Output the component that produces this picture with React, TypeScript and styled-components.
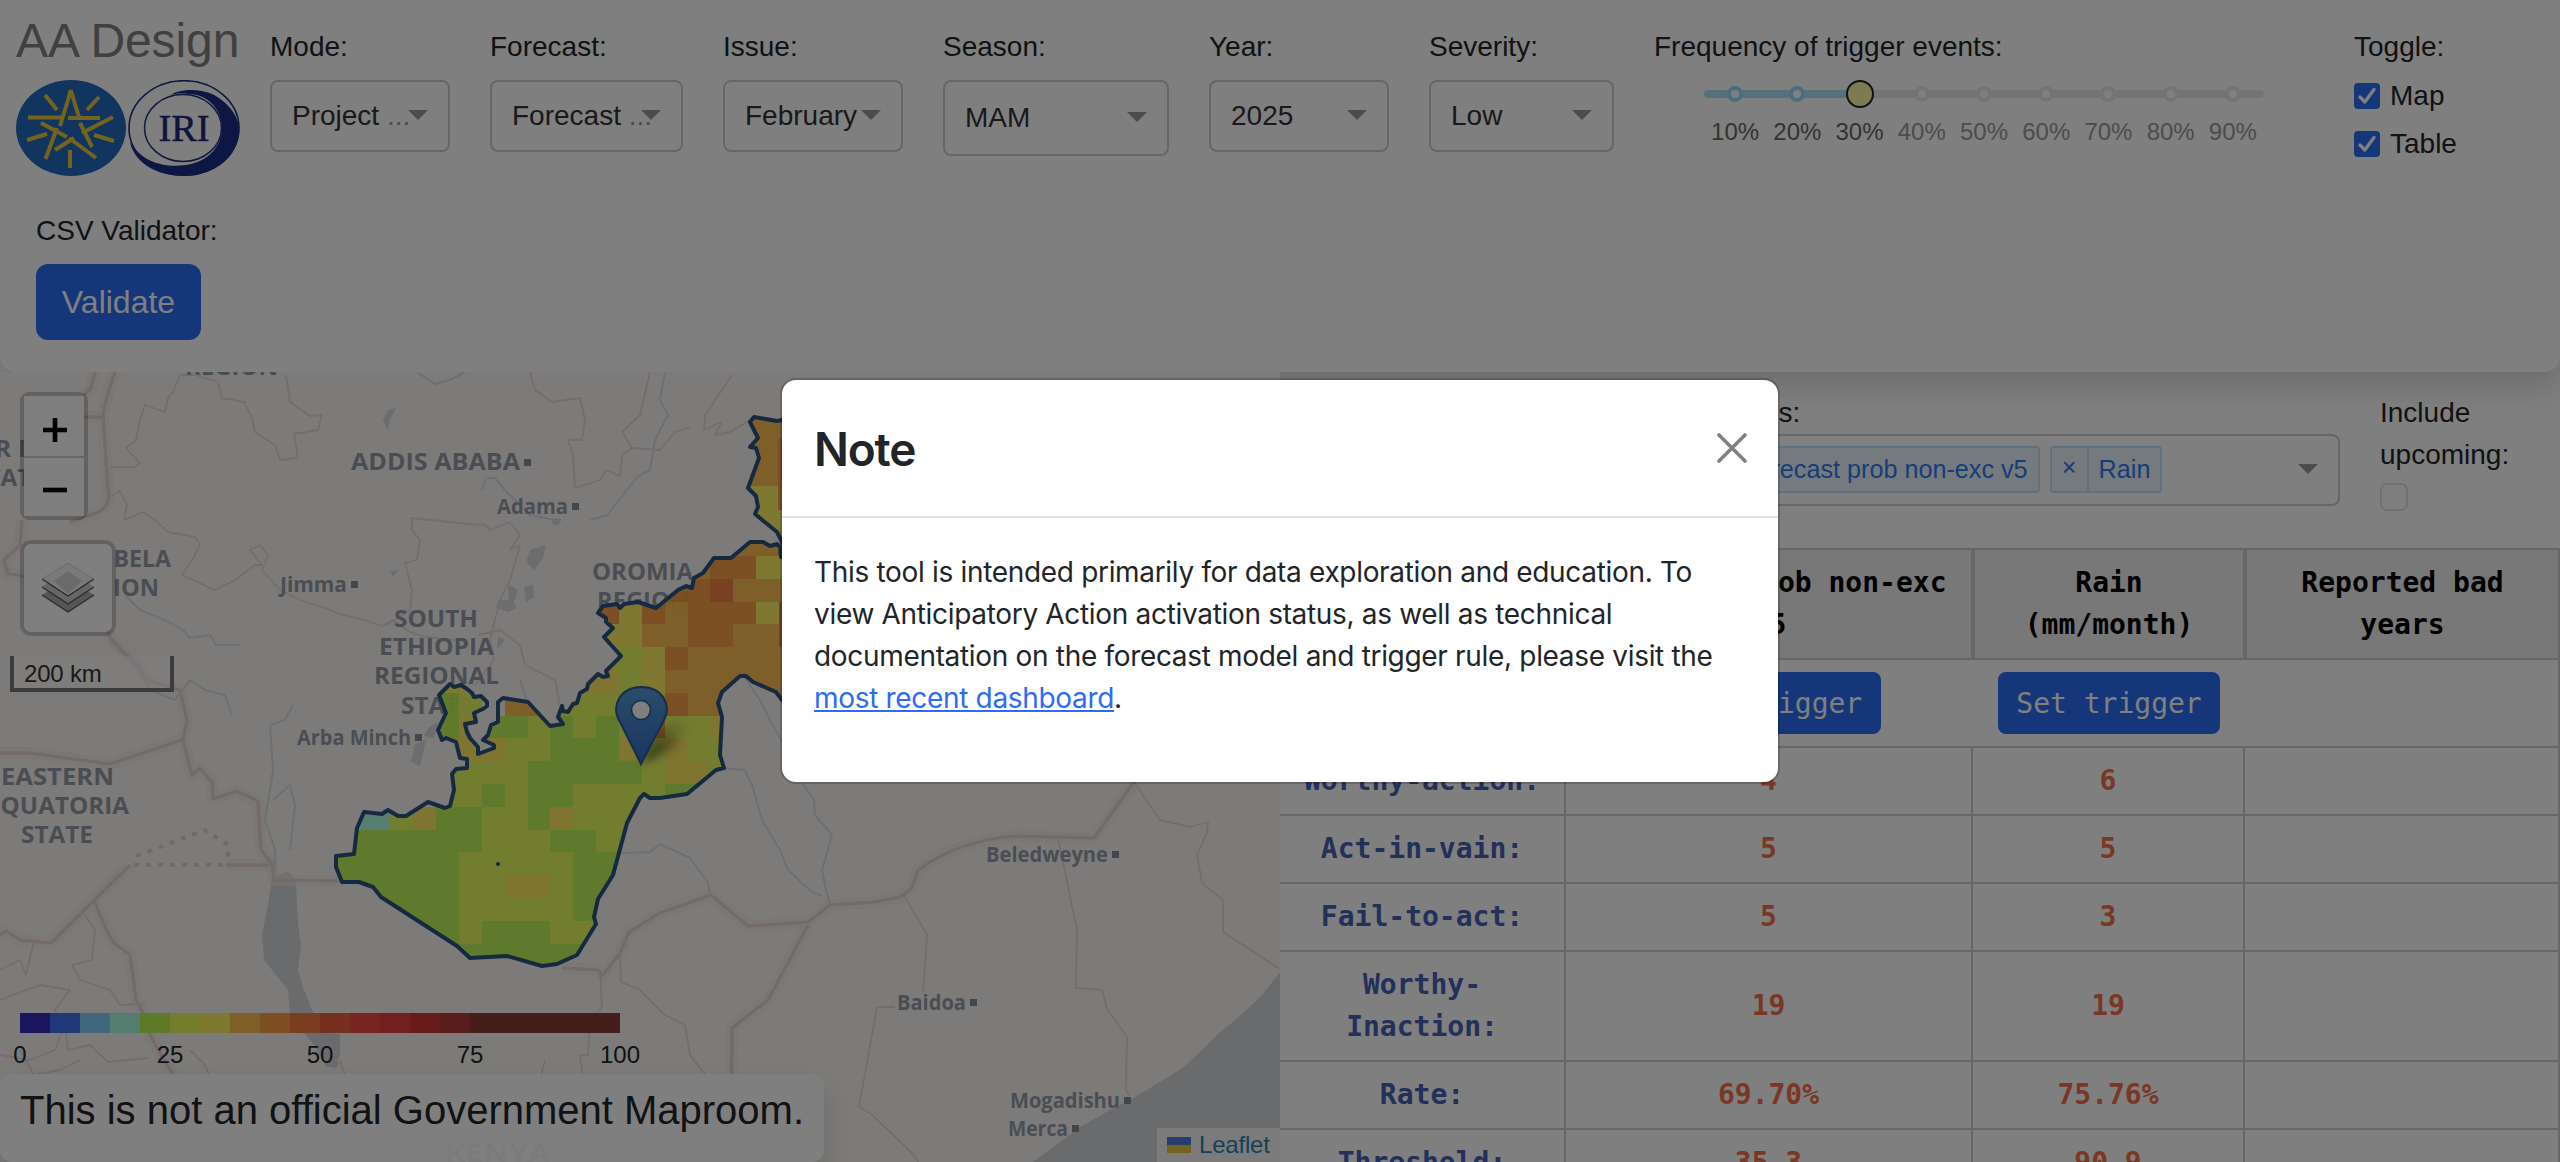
import React from "react";
import styled, { createGlobalStyle } from "styled-components";

const sans = `"Liberation Sans", Arial, Helvetica, sans-serif`;
const mono = `"DejaVu Sans Mono", Menlo, monospace`;

const GlobalStyle = createGlobalStyle`
  *, *::before, *::after { box-sizing: border-box; }
  body { margin: 0; background: #fff; overflow: hidden; }
`;

const Page = styled.div`
  position: relative;
  width: 2560px;
  height: 1162px;
  overflow: hidden;
  display: flex;
  flex-direction: column;
  background: #fff;
  color: #212529;
  font-family: ${sans};
  font-size: 28px;
  line-height: 42px;
`;

const Header = styled.header`
  position: relative;
  z-index: 1;
  flex: none;
  height: 372px;
  padding: 12px 16px 0;
  background: #fff;
  border-radius: 16px;
  box-shadow: 0 16px 32px rgba(0, 0, 0, 0.15);
`;

const ControlRow = styled.div`
  display: flex;
  align-items: flex-start;
  gap: 40px;
  height: 198px;
`;

const Brand = styled.div`
  width: 224px;
  margin-right: -10px;
`;

const Title = styled.h1`
  margin: 0 0 12px;
  font-size: 48px;
  font-weight: 400;
  line-height: 57px;
  height: 56px;
  letter-spacing: -0.1px;
  white-space: nowrap;
  color: #808080;
`;

const Logos = styled.div`
  display: flex;
  gap: 2px;
  svg { display: block; }
`;

const Field = styled.div<{ $w?: number }>`
  flex: none;
  margin-top: 14px;
  width: ${(p) => (p.$w ? `${p.$w}px` : "auto")};
`;

const Label = styled.div<{ $gap?: number }>`
  margin-bottom: ${(p) => p.$gap ?? 12}px;
  white-space: nowrap;
`;

const SelectBox = styled.div<{ $tall?: boolean }>`
  display: flex;
  align-items: center;
  height: ${(p) => (p.$tall ? 76 : 72)}px;
  padding: 0 20px 0 20px;
  border: 2px solid #ccc;
  border-radius: 8px;
  color: #333;
`;

const SelectText = styled.span`
  flex: 1 1 0;
  min-width: 0;
  white-space: nowrap;
`;

const Dots = styled.span`
  color: #999;
`;

const Caret = styled.span`
  flex: none;
  width: 20px;
  height: 10px;
  margin-top: -2px;
  background: #999;
  clip-path: polygon(0 0, 100% 0, 50% 100%);
`;

const FreqField = styled(Field)`
  width: 660px;
`;

const Slider = styled.div`
  width: 560px;
  margin: 22px 0 0 50px;
`;

const Rail = styled.div`
  position: relative;
  height: 8px;
  border-radius: 6px;
  background: #e9e9e9;
`;

const Track = styled.div`
  width: 156px;
  height: 8px;
  border-radius: 6px 0 0 6px;
  background: #abe2fb;
`;

const Ticks = styled.div`
  position: absolute;
  inset: -10px 0;
  display: grid;
  grid-template-columns: repeat(9, 1fr);
  place-items: center;
`;

const Tick = styled.span<{ $on: boolean }>`
  width: 16px;
  height: 16px;
  border: 4px solid ${(p) => (p.$on ? "#96dbfa" : "#e9e9e9")};
  border-radius: 50%;
  background: #fff;
`;

const Handle = styled.span`
  width: 28px;
  height: 28px;
  border: 2px solid #212529;
  border-radius: 50%;
  background: #f8f6a4;
`;

const Marks = styled.div`
  display: grid;
  grid-template-columns: repeat(9, 1fr);
  margin-top: 16px;
  font-size: 24px;
  line-height: 36px;
  text-align: center;
`;

const Mark = styled.span<{ $on: boolean }>`
  color: ${(p) => (p.$on ? "#666" : "#999")};
`;

const CheckRow = styled.div`
  display: flex;
  align-items: center;
  gap: 10px;
  height: 48px;
`;

const CheckMark = styled.span`
  width: 26px;
  height: 26px;
  border-radius: 4px;
  background: #2c6cf4;
  svg { display: block; }
`;

const CsvField = styled.div`
  padding-left: 20px;
`;

const Button = styled.button<{ $mono?: boolean }>`
  display: block;
  border: 0;
  border-radius: ${(p) => (p.$mono ? 8 : 12)}px;
  background: #2c6cf4;
  color: #fff;
  padding: 0;
  width: ${(p) => (p.$mono ? 222 : 165)}px;
  height: ${(p) => (p.$mono ? 62 : 76)}px;
  font-family: ${(p) => (p.$mono ? mono : sans)};
  font-size: ${(p) => (p.$mono ? 28 : 32)}px;
`;

const Main = styled.main`
  flex: 1;
  display: flex;
  min-height: 0;
`;

const MapPane = styled.section`
  position: relative;
  z-index: 2;
  width: 1280px;
  height: 790px;
  overflow: hidden;
  background: #f9f7f2;
`;

const MapDrawing = styled.svg`
  display: block;
  font-family: "Open Sans", "Noto Sans", sans-serif;
`;

const ZoomBar = styled.div`
  position: absolute;
  left: 20px;
  top: 20px;
  width: 68px;
  border: 4px solid rgba(0, 0, 0, 0.2);
  background-clip: padding-box;
  border-radius: 9px;
`;

const ZoomKey = styled.div`
  height: 60px;
  padding: 8px 0 0 1px;
  display: grid;
  place-items: center;
  background: #fff;
  svg { display: block; }
  & + & { padding-top: 6px; border-top: 2px solid #ccc; }
`;

const LayersKey = styled.div`
  position: absolute;
  left: 20px;
  top: 168px;
  width: 96px;
  height: 96px;
  display: grid;
  place-items: center;
  border: 4px solid rgba(0, 0, 0, 0.2);
  border-radius: 11px;
  background: #fff;
  background-clip: padding-box;
`;

const ScaleBar = styled.div`
  position: absolute;
  left: 10px;
  top: 284px;
  width: 164px;
  height: 36px;
  padding-left: 10px;
  border: 4px solid #777;
  border-top: 0;
  background: rgba(255, 255, 255, 0.5);
  font-size: 24px;
  line-height: 35px;
  letter-spacing: -0.2px;
  color: #333;
`;

const Legend = styled.div`
  position: absolute;
  left: 20px;
  top: 641px;
  width: 600px;
`;

const LegendBar = styled.div`
  display: flex;
  height: 20px;
`;

const Swatch = styled.span<{ $c: string; $n?: number }>`
  flex: ${(p) => p.$n ?? 1};
  background: ${(p) => p.$c};
`;

const LegendScale = styled.div`
  display: flex;
  justify-content: space-between;
  margin: 4px -30px 0;
  font-size: 24px;
  line-height: 36px;
  span { width: 60px; text-align: center; }
`;

const Disclaimer = styled.div`
  position: absolute;
  left: 0;
  top: 702px;
  width: 824px;
  height: 88px;
  padding-left: 20px;
  border-radius: 12px;
  background: rgba(255, 255, 255, 0.92);
  box-shadow: 0 16px 32px rgba(0, 0, 0, 0.15);
  font-size: 40px;
  line-height: 73px;
  white-space: nowrap;
`;

const Attribution = styled.div`
  position: absolute;
  right: 0;
  bottom: 0;
  display: flex;
  align-items: center;
  gap: 8px;
  width: 123px;
  height: 34px;
  padding-left: 10px;
  background: rgba(255, 255, 255, 0.8);
  font-size: 24px;
  letter-spacing: -0.2px;
  color: #2e80ac;
`;

const Flag = styled.span`
  width: 24px;
  height: 16px;
  background: linear-gradient(#4c7be1 50%, #e8c43a 50%);
`;

const DataPane = styled.section`
  width: 1280px;
  background: #fff;
`;

const Filters = styled.div`
  display: flex;
  justify-content: flex-end;
  gap: 40px;
  height: 176px;
  padding: 20px 20px 0 0;
`;

const Columns = styled.div`
  width: 658px;
`;

const MultiSelect = styled.div`
  display: flex;
  align-items: center;
  gap: 10px;
  height: 72px;
  padding: 0 20px 0 9px;
  border: 2px solid #ccc;
  border-radius: 8px;
`;

const Tag = styled.span`
  display: flex;
  height: 47px;
  margin-top: -1px;
  border: 2px solid #c2e0ff;
  border-radius: 4px;
  background: #ebf5ff;
  color: #2f7bf0;
  font-size: 25.2px;
  line-height: 43px;
  white-space: nowrap;
`;

const TagClose = styled.span`
  width: 37px;
  border-right: 2px solid #c2e0ff;
  text-align: center;
  line-height: 38px;
`;

const TagText = styled.span`
  padding: 0 10px;
`;

const CaretEnd = styled(Caret)`
  margin-left: auto;
`;

const Include = styled.div`
  width: 160px;
`;

const EmptyCheck = styled.div`
  width: 28px;
  height: 28px;
  margin-top: 7px;
  border: 2px solid #dee2e6;
  border-radius: 7px;
`;

const Grid = styled.div`
  font-family: ${mono};
  border-top: 2px solid #ccc;
`;

const GridRow = styled.div`
  display: grid;
  grid-template-columns: 286px 407px 272px 315px;
  border-bottom: 2px solid #ccc;
`;

const HeadCell = styled.div`
  height: 108px;
  padding: 12px 20px;
  border: solid #ccc;
  border-width: 0 2px;
  background: #f0f0f0;
  color: #000;
  font-weight: 700;
  text-align: center;
  white-space: pre-line;
`;

const ButtonCell = styled.div<{ $last?: boolean }>`
  height: 86px;
  display: grid;
  place-items: center;
  border-right: ${(p) => (p.$last ? "2px solid #ccc" : "0")};
`;

const Cell = styled.div<{ $name?: boolean }>`
  display: grid;
  place-items: center;
  min-height: 66px;
  padding: 12px;
  border-right: 2px solid #ccc;
  font-weight: 700;
  text-align: center;
  color: ${(p) => (p.$name ? "#4461b4" : "#f0714b")};
  white-space: pre-line;
`;

const Backdrop = styled.div`
  position: absolute;
  inset: 0;
  z-index: 10;
  display: flex;
  justify-content: center;
  align-items: flex-start;
  padding-top: 378px;
  background: rgba(0, 0, 0, 0.5);
`;

const Dialog = styled.div`
  width: 1000px;
  height: 406px;
  border: 2px solid rgba(0, 0, 0, 0.175);
  border-radius: 16px;
  background: #fff;
  background-clip: padding-box;
  font-family: Inter, "Noto Sans", sans-serif;
`;

const DialogHead = styled.div`
  display: flex;
  align-items: center;
  justify-content: space-between;
  height: 138px;
  padding: 0 31px 0 32px;
  border-bottom: 2px solid #dee2e6;
`;

const DialogTitle = styled.h4`
  margin: 2px 0 0;
  font-size: 46px;
  font-weight: 600;
  letter-spacing: -1.2px;
`;

const DialogBody = styled.div`
  padding: 33px 32px;
  white-space: nowrap;
  letter-spacing: -0.32px;
`;

const Link = styled.a`
  color: #2c6cf4;
  text-decoration: underline;
`;

const selects = [
  { label: "Mode:", value: "Project", more: true, w: 180 },
  { label: "Forecast:", value: "Forecast", more: true, w: 193 },
  { label: "Issue:", value: "February", w: 180 },
  { label: "Season:", value: "MAM", w: 226, tall: true },
  { label: "Year:", value: "2025", w: 180 },
  { label: "Severity:", value: "Low", w: 185 },
];

const percents = [10, 20, 30, 40, 50, 60, 70, 80, 90];

const scaleColors = [
  "#362eb8", "#4270f0", "#82cef8", "#a8f8de", "#baf454", "#e4fa5a", "#fff060", "#febe4e",
  "#f89c44", "#f47a40", "#f0603c", "#ec4c42", "#e0403e", "#ce3836", "#b23a36",
];

const rows: [string, string, string][] = [
  ["Worthy-action:", "4", "6"],
  ["Act-in-vain:", "5", "5"],
  ["Fail-to-act:", "5", "3"],
  ["Worthy-\nInaction:", "19", "19"],
  ["Rate:", "69.70%", "75.76%"],
  ["Threshold:", "35.3", "90.9"],
];

/* Forecast raster: one letter per cell, read west to east and north to south. */
const rasterColors: Record<string, string> = {
  G: "#bcf450", Y: "#e6fa58", K: "#fff05c", L: "#fee858", O: "#febc4a", B: "#f89a42", R: "#f47a3c", T: "#aafce0",
};
const raster = [
  "................OOOOO",
  "................OBBKK",
  "...............BBROOO",
  "...........BBKBOBBBKR",
  "............KKOOBBOOR",
  "............YYKBOOOOO",
  ".....KK...LLLYKOOOOOO",
  ".....GY.OOYYYYYBOOOOO",
  ".....GLGGYGYGYBYYLOOO",
  ".....LLLYYGGGLYLYYOOO",
  ".....YYYYGGGGGYLLYOOO",
  ".....YYGYGGYYYYGGYOOO",
  "TTTYLGGYYGLYYYYYYYOOO",
  "GGGGGGGYYYGGYYYYYYOOO",
  "GGGGGGYYYYYGGGGYYYOOO",
  "GGGGGGYYLLYGGGGYYYOOO",
  "GGGGGGYYYYYGGGGYYYOOO",
  "GGGGGGYGGGYYYYYYYYOOO",
  "GGGGGGGGGGGGGGGGYYOOO",
];
const colW = 22.87;
const rowH = 22.8;

const regionPath =
  "M450 684L454 687L461 685L467 689L472 693L474 697L481 696L487 702L487 706L483 709L474 713L476 722L465 724L467 732L470 738L478 747L478 754L494 748L494 745L483 740L488 735L491 725L498 722L498 702L503 698L528 702L550 726L563 724L558 717L562 706L563 711L568 712L573 704L577 703L580 693L587 689L588 684L598 674L603 677L608 676L606 671L621 656L604 637L613 628L606 622L606 618L598 613L603 606L617 604L620 608L624 604L638 602L656 608L678 590L686 586L692 588L694 578L703 573L714 558L731 558L750 542L763 542L770 546L777 544L780 547L781 557L830 557L830 720L782 700L776 692L753 682L746 676L740 676L722 692L718 703L722 717L720 755L724 768L716 770L687 794L660 798L650 798L644 794L640 798L627 823L613 875L598 899L594 917L596 924L577 955L557 964L542 966L507 956L470 958L457 946L381 897L373 887L359 882L342 882L336 867L336 856L354 854L357 828L364 812L382 814L388 810L398 816L406 816L428 802L445 808L450 806L454 790L452 774L456 769L467 768L467 759L460 758L456 742L446 738L442 740L438 730L446 713L439 695Z";
const northPath =
  "M830 420L782 420L777 421L754 417L750 422L758 438L750 447L756 448L759 458L748 488L756 496L758 507L755 514L777 532L783 544L830 560Z";

const majorBorders = [
  "M95 372L91 388L84 395M115 372L106 400L103 414L108 490Q112 506 96 513L70 522M22 520L20 545L4 560L8 574L20 575",
  "M84 417L104 417",
  "M20 575L55 590L90 600L112 640L140 668L148 680L180 690L187 720L183 740L192 775L200 768L212 782L213 799L236 791L258 801L261 850L272 864L274 880L345 881",
  "M130 865L51 943L20 940L6 931L0 935M94 900L104 925L113 942L130 955L136 1000L147 1020L150 1035L164 1060L180 1085M0 753L30 753L110 764L182 740",
  "M226 865L274 865",
  "M562 968L598 970L602 976L620 953L629 932L660 913L711 895L748 926L808 922L830 905L875 902L900 897L912 888L918 870Q960 840 1015 836L1094 838L1134 782L1160 745",
  "M808 925L768 1000L732 1028L731 1162",
];
const minorBorders = [
  "M195 375L180 375L173 392L168 398L165 412L145 405L140 420L136 440L126 448L140 463L134 467L110 467M195 375L218 382L222 398L244 402L252 418L255 432L275 445L280 460L298 458L294 434L318 430L322 415L310 416L290 402L286 375",
  "M530 372L535 390L552 402L580 398L585 420L582 440L568 440L573 455L575 488L600 480L606 470L620 476L622 455L632 448L622 432L640 415L650 372",
  "M704 430L705 415L732 375M704 430L722 422L715 435L730 432L750 420M632 448L660 450L675 432L690 427",
  "M110 497L120 491L127 505L124 520L143 512L155 520L168 532L195 537L200 545L192 560L182 575L215 590L235 580L255 565L262 565L250 550L260 545L268 555L262 570L280 590L300 600L325 608L340 614L365 620L382 626L392 620L410 632L425 637L455 640",
  "M412 518L470 524L485 525L490 530L510 522L520 535L510 550L520 545L510 580L500 600L490 640L494 660L475 685M412 518L412 530L420 540L417 560L405 563L412 590L410 610L385 626",
  "M478 635L500 630L520 645L525 665L555 680L560 705",
  "M600 970L602 1007L590 1020L588 1055L580 1055L585 1100L600 1162M620 953L621 982L640 990L665 1015L685 1025L690 1055L705 1074",
  "M904 895L927 935L923 992M895 1007L877 1007L859 1107L870 1113L912 1153L918 1162M1058 838L1077 930L1076 988L1102 990L1107 1009L1127 1037L1126 1090L1130 1096",
  "M1134 782L1160 820L1190 827L1208 822L1207 833L1197 855L1202 883L1223 900L1223 932L1280 969",
  "M84 914L95 930L92 960L72 965L80 980L110 990L120 1005L145 1004M0 970L20 960L26 975L34 940M0 1000L40 985L70 990L55 1010L65 1025L55 1050L30 1060L0 1055M65 1025L68 1050L90 1045L108 1062L148 1058M20 1050L34 1075L60 1070L80 1060",
  "M340 1060L350 1090L370 1162M190 1050L205 1065L220 1100M545 1060L540 1080L552 1110L560 1162",
];
const rivers = [
  "M418 373L435 384L450 380L465 372M665 372L660 400L668 415L660 430L655 440L650 470L638 476L615 505L608 515L590 520M482 490L486 478L495 478L505 490L530 515L555 520",
  "M125 595L140 610L165 620L183 630L190 638L210 635L216 645L240 645M110 640L140 672L150 690L175 700L190 680L205 690L225 695L232 715",
  "M293 705L285 720L270 725L273 770L270 790L265 820L275 850L275 870M273 800L290 785L295 805L290 850",
  "M520 680L530 710M745 678L760 700L770 720L782 742M724 768L745 770L752 785L762 820L780 850L788 870L812 892L822 896",
  "M620 853L650 852L660 844L690 858L708 882L710 895M803 784L814 800L815 815L832 835L822 870L826 890L830 905",
];

interface Place { t: string; x: number; y: number; w: number; s?: number; dot?: boolean }
const places: Place[] = [
  { t: "REGION", x: 185, y: 375, w: 93 },
  { t: "UPPER NILE", x: -71, y: 457, w: 147 },
  { t: "STATE", x: -27, y: 486, w: 72 },
  { t: "GAMBELA", x: 59, y: 567, w: 112 },
  { t: "REGION", x: 67, y: 596, w: 92 },
  { t: "ADDIS ABABA", x: 351, y: 470, w: 169, dot: true },
  { t: "Adama", x: 497, y: 514, w: 71, s: 22, dot: true },
  { t: "Jimma", x: 280, y: 592, w: 67, s: 22, dot: true },
  { t: "SOUTH", x: 394, y: 627, w: 84 },
  { t: "ETHIOPIA", x: 379, y: 655, w: 115 },
  { t: "REGIONAL", x: 374, y: 684, w: 125 },
  { t: "STATE", x: 401, y: 714, w: 72 },
  { t: "OROMIA", x: 592, y: 580, w: 101 },
  { t: "REGION", x: 597, y: 609, w: 92 },
  { t: "Arba Minch", x: 297, y: 745, w: 114, s: 22, dot: true },
  { t: "EASTERN", x: 1, y: 785, w: 113 },
  { t: "EQUATORIA", x: -13, y: 814, w: 142 },
  { t: "STATE", x: 21, y: 843, w: 72 },
  { t: "KENYA", x: 445, y: 1162, w: 105, s: 25 },
  { t: "Beledweyne", x: 986, y: 862, w: 122, s: 21, dot: true },
  { t: "Baidoa", x: 897, y: 1010, w: 69, s: 21, dot: true },
  { t: "Mogadishu", x: 1010, y: 1108, w: 110, s: 21, dot: true },
  { t: "Merca", x: 1008, y: 1136, w: 60, s: 21, dot: true },
];

const EthiopiaEmblem = () => (
  <svg width="110" height="96" viewBox="0 0 110 96">
    <ellipse cx="55" cy="48" rx="55" ry="48" fill="#226abe" />
    <g fill="none" stroke="#e6c83a" strokeWidth="4">
      <path d="M29 15L41 30M83 17L71 30M11 60L31 54M98 61L78 55M54 70V88" />
      <path d="M54.700 10L63 37M54.700 10L52 20L44 46M12 37.500H46M52 38H84M97 37L66 53M58 58L39 70M25 43L51 57M29.500 79L41 48M80 78L53 58M64 43L76 67" />
    </g>
  </svg>
);

const IriLogo = () => (
  <svg width="112" height="96" viewBox="0 0 112 96">
    <ellipse cx="56" cy="48" rx="55" ry="47.3" fill="#fff" stroke="#1e327e" strokeWidth="1.6" />
    <path
      fill="#1c2f86"
      d="M42 15C52 9 70 8 84 14C100 22 111 36 111 50C111 77 86 96 56 96C28 96 6 82 2 62C14 82 36 88 58 85C80 82 94 66 94 48C94 30 80 14 60 14C52 13 46 14 42 15Z"
    />
    <ellipse cx="55" cy="48" rx="38.500" ry="33.500" fill="none" stroke="#1e327e" strokeWidth="1.5" />
    <text x="56" y="60.500" textAnchor="middle" fontFamily="Liberation Serif, serif" fontSize="38" textLength="51" lengthAdjust="spacingAndGlyphs" fill="#1a2c74" stroke="#1a2c74" strokeWidth="0.5">
      IRI
    </text>
  </svg>
);

const Check = () => (
  <CheckMark>
    <svg width="26" height="26" viewBox="0 0 26 26">
      <path d="M6 14L10.800 19L20 6.500" fill="none" stroke="#fff" strokeWidth="3.400" strokeLinecap="round" strokeLinejoin="round" />
    </svg>
  </CheckMark>
);

const MapArt = () => (
  <MapDrawing width="1280" height="790" viewBox="0 372 1280 790">
    <defs>
      <clipPath id="region">
        <path d={regionPath} />
      </clipPath>
      <clipPath id="north">
        <path d={northPath} />
      </clipPath>
      <linearGradient id="pin" x1="0" y1="0" x2="0" y2="1">
        <stop offset="0" stopColor="#569ad2" />
        <stop offset="1" stopColor="#326ac6" />
      </linearGradient>
      <linearGradient id="pinShade" x1="0" y1="1" x2="0.8" y2="0.2">
        <stop offset="0" stopColor="#000" stopOpacity="0.7" />
        <stop offset="1" stopColor="#000" stopOpacity="0.1" />
      </linearGradient>
      <filter id="soft" x="-50%" y="-50%" width="200%" height="200%">
        <feGaussianBlur stdDeviation="5" />
      </filter>
    </defs>

    <path d="M1280 972L1262 995L1240 1016L1218 1034L1204 1048L1184 1067L1160 1082L1130 1100L1110 1110L1080 1127L1060 1142L1033 1162H1280Z" fill="#d4d6da" />
    <path d="M272 878L288 872L296 880L297 905L298 925L301 945L298 970L304 990L314 1015L318 1040L325 1062L340 1062L336 1068L325 1065L314 1045L290 1015L288 990L272 970L264 960L262 935L268 905Z" fill="#d4d6da" />
    <path d="M290 1010L312 1010L318 1032L340 1034L340 1055L334 1068L326 1066L316 1046L292 1020Z" fill="#d4d6da" />
    <g fill="#d8dade">
      <path d="M388 410L396 408L390 420L388 430L383 420ZM530 550L546 545L543 558L534 570L526 562ZM508 584L518 590L515 600L509 602ZM524 588L533 584L534 598L526 602ZM498 600L514 600L516 608L508 612L496 608ZM552 518L562 519L558 526L552 524ZM428 728L438 722L434 738L424 736ZM415 744L426 740L420 766L411 762ZM390 572L398 570L393 577ZM498 636L505 640L497 650Z" />
    </g>

    <g fill="none" strokeLinejoin="round">
      {majorBorders.map((d) => (
        <path key={"h" + d} d={d} stroke="#f2e9e6" strokeWidth="12" opacity="0.6" />
      ))}
      {majorBorders.map((d) => (
        <path key={d} d={d} stroke="#e6d4d4" strokeWidth="3.2" />
      ))}
      {minorBorders.map((d) => (
        <path key={d} d={d} stroke="#eadada" strokeWidth="1.8" />
      ))}
      {rivers.map((d) => (
        <path key={d} d={d} stroke="#dcdee2" strokeWidth="2" />
      ))}
      <path d="M134 865H226M136 856L205 830L228 845V858" stroke="#e6d2d2" strokeWidth="4" strokeDasharray="5 7" />
    </g>

    {places.map((p) => (
      <g key={`${p.t}${p.x}-${p.y}`} fill="#949ca9">
        <text x={p.x} y={p.y} fontSize={p.s ?? 23} fontWeight={700} textLength={p.w} lengthAdjust="spacingAndGlyphs">
          {p.t}
        </text>
        {p.dot && <rect x={p.x + p.w + 4} y={p.y - 11} width="7" height="7" fill="#868e9a" />}
      </g>
    ))}

    <g clipPath="url(#region)" opacity="0.95" shapeRendering="crispEdges">
      {raster.flatMap((line, r) =>
        [...line].map((c, i) =>
          c === "." ? null : (
            <rect
              key={`${r}-${i}`}
              x={321.7 + i * colW}
              y={533.2 + r * rowH}
              width={colW + 0.5}
              height={rowH + 0.5}
              fill={rasterColors[c]}
            />
          )
        )
      )}
    </g>
    <g clipPath="url(#north)" opacity="0.95">
      <rect x="740" y="410" width="60" height="76" fill={rasterColors.O} />
      <rect x="740" y="486" width="60" height="80" fill={rasterColors.K} />
      <rect x="778" y="438" width="10" height="72" fill={rasterColors.B} />
    </g>
    <g fill="none" stroke="#2a5482" strokeWidth="4" strokeLinejoin="round">
      <path d={regionPath} />
      <path d={northPath} />
    </g>
    <circle cx="498" cy="864" r="2" fill="#234470" />

    <path d="M641 764L656 734Q668 716 684 722Q690 734 670 750Z" fill="url(#pinShade)" filter="url(#soft)" />
    <path d="M641 764L620 722C610 705 621 687 641.500 687C662 687 673 705 663 722Z" fill="url(#pin)" stroke="#2c5c94" strokeWidth="2" />
    <circle cx="641" cy="710" r="9.500" fill="#fff" stroke="#2c5c94" strokeWidth="1.600" />
  </MapDrawing>
);

const LayersIcon = () => (
  <svg width="52" height="52" viewBox="0 0 52 52">
    <path d="M0 33L26 17L52 33L26 50Z" fill="#acacac" />
    <path d="M0 33L26 50L52 33" fill="none" stroke="#555" strokeWidth="1.300" />
    <path d="M0 25L26 9L52 25L26 42Z" fill="#cacaca" />
    <path d="M0 25L26 42L52 25" fill="none" stroke="#555" strokeWidth="1.300" />
    <path d="M0 17L26 1L52 17L26 34Z" fill="#f2f2f2" stroke="#d0d0d0" strokeWidth="0.800" />
    <path d="M12 19L26 9L40 19L26 32Z" fill="#d6d6d6" />
    <path d="M0 17L26 34L52 17" fill="none" stroke="#555" strokeWidth="1.300" />
  </svg>
);

export default function App() {
  return (
    <Page>
      <GlobalStyle />
      <Header>
        <ControlRow>
          <Brand>
            <Title>AA Design</Title>
            <Logos>
              <EthiopiaEmblem />
              <IriLogo />
            </Logos>
          </Brand>
          {selects.map((s) => (
            <Field key={s.label} $w={s.w}>
              <Label>{s.label}</Label>
              <SelectBox $tall={s.tall}>
                <SelectText>
                  {s.value}
                  {s.more && <Dots> ...</Dots>}
                </SelectText>
                <Caret />
              </SelectBox>
            </Field>
          ))}
          <FreqField>
            <Label>Frequency of trigger events:</Label>
            <Slider>
              <Rail>
                <Track />
                <Ticks>
                  {percents.map((p) => (p === 30 ? <Handle key={p} /> : <Tick key={p} $on={p < 30} />))}
                </Ticks>
              </Rail>
              <Marks>
                {percents.map((p) => (
                  <Mark key={p} $on={p <= 30}>{p}%</Mark>
                ))}
              </Marks>
            </Slider>
          </FreqField>
          <Field>
            <Label $gap={4}>Toggle:</Label>
            <CheckRow><Check />Map</CheckRow>
            <CheckRow><Check />Table</CheckRow>
          </Field>
        </ControlRow>
        <CsvField>
          <Label>CSV Validator:</Label>
          <Button>Validate</Button>
        </CsvField>
      </Header>

      <Main>
        <MapPane>
          <MapArt />
          <ZoomBar>
            <ZoomKey>
              <svg width="26" height="26"><path d="M1 13H25M13 1V25" stroke="#000" strokeWidth="4.600" /></svg>
            </ZoomKey>
            <ZoomKey>
              <svg width="26" height="26"><path d="M1 13H25" stroke="#000" strokeWidth="4.600" /></svg>
            </ZoomKey>
          </ZoomBar>
          <LayersKey><LayersIcon /></LayersKey>
          <ScaleBar>200 km</ScaleBar>
          <Legend>
            <LegendBar>
              {scaleColors.map((c) => <Swatch key={c} $c={c} />)}
              <Swatch $c="#8a3a34" $n={5} />
            </LegendBar>
            <LegendScale>
              {[0, 25, 50, 75, 100].map((n) => <span key={n}>{n}</span>)}
            </LegendScale>
          </Legend>
          <Disclaimer>This is not an official Government Maproom.</Disclaimer>
          <Attribution><Flag />Leaflet</Attribution>
        </MapPane>

        <DataPane>
          <Filters>
            <Columns>
              <Label $gap={0}>Columns:</Label>
              <MultiSelect>
                <Tag><TagClose>×</TagClose><TagText>Forecast prob non-exc v5</TagText></Tag>
                <Tag><TagClose>×</TagClose><TagText>Rain</TagText></Tag>
                <CaretEnd />
              </MultiSelect>
            </Columns>
            <Include>
              Include upcoming:
              <EmptyCheck />
            </Include>
          </Filters>
          <Grid>
            <GridRow>
              <HeadCell />
              <HeadCell>{"Forecast prob non-exc\nv5"}</HeadCell>
              <HeadCell>{"Rain\n(mm/month)"}</HeadCell>
              <HeadCell>{"Reported bad\nyears"}</HeadCell>
            </GridRow>
            <GridRow>
              <ButtonCell />
              <ButtonCell><Button $mono>Set trigger</Button></ButtonCell>
              <ButtonCell><Button $mono>Set trigger</Button></ButtonCell>
              <ButtonCell $last />
            </GridRow>
            {rows.map(([name, a, b]) => (
              <GridRow key={name}>
                <Cell $name>{name}</Cell>
                <Cell>{a}</Cell>
                <Cell>{b}</Cell>
                <Cell />
              </GridRow>
            ))}
          </Grid>
        </DataPane>
      </Main>

      <Backdrop>
        <Dialog>
          <DialogHead>
            <DialogTitle>Note</DialogTitle>
            <svg width="30" height="30" viewBox="0 0 30 30">
              <path d="M2 2L28 28M28 2L2 28" stroke="#808080" strokeWidth="3.600" strokeLinecap="round" />
            </svg>
          </DialogHead>
          <DialogBody>
            This tool is intended primarily for data exploration and education. To
            <br />
            view Anticipatory Action activation status, as well as technical
            <br />
            documentation on the forecast model and trigger rule, please visit the
            <br />
            <Link>most recent dashboard</Link>.
          </DialogBody>
        </Dialog>
      </Backdrop>
    </Page>
  );
}
